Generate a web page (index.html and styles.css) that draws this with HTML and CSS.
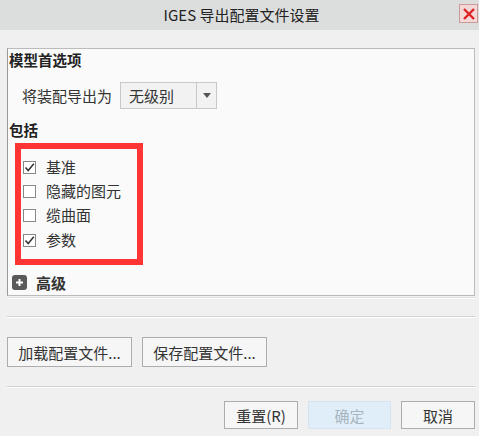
FILE: index.html
```html
<!DOCTYPE html>
<html>
<head>
<meta charset="utf-8">
<link rel="stylesheet" href="styles.css">
</head>
<body>
<div class="dialog">
  <div class="titlebar">
    <div class="title">IGES 导出配置文件设置</div>
    <div class="close">
      <svg width="14" height="14" viewBox="0 0 14 14"><path d="M2 2 L12 12 M12 2 L2 12" stroke="#d22" stroke-width="2.4"/></svg>
    </div>
  </div>
  <div class="body">
    <div class="panel">
      <div class="section-title">模型首选项</div>
      <div class="row-export">
        <span class="label">将装配导出为</span>
        <div class="select">
          <span class="select-value">无级别</span>
          <span class="select-arrow"><svg width="8" height="5" viewBox="0 0 8 5"><path d="M0 0 L8 0 L4 5 Z" fill="#555"/></svg></span>
        </div>
      </div>
      <div class="section-title include">包括</div>
      <div class="highlight">
        <div class="check"><span class="box checked"><svg width="13" height="13" viewBox="0 0 13 13"><path d="M2.5 6.5 L5.2 9.5 L10.8 2.8" stroke="#333" stroke-width="1.5" fill="none"/></svg></span>基准</div>
        <div class="check"><span class="box"></span>隐藏的图元</div>
        <div class="check"><span class="box"></span>缆曲面</div>
        <div class="check"><span class="box checked"><svg width="13" height="13" viewBox="0 0 13 13"><path d="M2.5 6.5 L5.2 9.5 L10.8 2.8" stroke="#333" stroke-width="1.5" fill="none"/></svg></span>参数</div>
      </div>
      <div class="advanced">
        <span class="plus"><svg width="15" height="15" viewBox="0 0 15 15"><rect x="0" y="0" width="15" height="15" rx="3" fill="#5a5a5a"/><path d="M4 7.5 H11 M7.5 4 V11" stroke="#fff" stroke-width="2"/></svg></span>
        <span class="adv-label">高级</span>
      </div>
    </div>
    <div class="sep sep0"></div>
    <div class="sep sep1"></div>
    <div class="file-buttons">
      <button class="btn">加载配置文件...</button>
      <button class="btn">保存配置文件...</button>
    </div>
    <div class="sep sep2"></div>
    <div class="footer">
      <button class="btn fbtn">重置(R)</button>
      <button class="btn fbtn disabled">确定</button>
      <button class="btn fbtn">取消</button>
    </div>
  </div>
</div>
</body>
</html>
```
FILE: styles.css
```css
html, body {
  margin: 0;
  padding: 0;
  width: 479px;
  height: 436px;
  overflow: hidden;
  background: #f0f0f0;
  font-family: "Noto Sans CJK SC", "Microsoft YaHei", sans-serif;
  color: #222;
}
.dialog {
  width: 479px;
  height: 436px;
  display: flex;
  flex-direction: column;
}
.titlebar {
  height: 30px;
  background: #dcdedd;
  position: relative;
  display: flex;
  align-items: center;
  justify-content: center;
}
.title {
  font-size: 15px;
  color: #222;
  margin-left: 4px;
  line-height: 30px;
}
.close {
  position: absolute;
  left: 459px;
  top: 4px;
  width: 17px;
  height: 17px;
  background: #f4d8d8;
  border: 1px solid #c99;
  display: flex;
  align-items: center;
  justify-content: center;
}
.body {
  flex: 1;
  display: flex;
  flex-direction: column;
  padding: 18px 4px 0 7px;
}
.panel {
  background: #fafafa;
  border: 1px solid #bbb;
  border-left: 1px solid #999;
  height: 248px;
  box-sizing: border-box;
  padding: 0 0 0 1px;
  display: flex;
  flex-direction: column;
}
.section-title {
  font-size: 14.5px;
  font-weight: bold;
  line-height: 20px;
  margin-top: 1px;
  color: #222;
}
.row-export {
  display: flex;
  align-items: center;
  margin-top: 12px;
  padding-left: 13px;
}
.label {
  font-size: 15px;
  color: #333;
}
.select {
  margin-left: 8px;
  width: 97px;
  height: 27px;
  border: 1px solid #c8c8c8;
  background: #f2f2f2;
  display: flex;
  box-sizing: border-box;
}
.select-value {
  flex: 1;
  font-size: 15px;
  line-height: 25px;
  padding-left: 8px;
  color: #333;
  border-right: 1px solid #c8c8c8;
}
.select-arrow {
  width: 19px;
  display: flex;
  align-items: center;
  justify-content: center;
}
.include {
  margin-top: 11px;
}
.highlight {
  margin-top: 3px;
  margin-left: 6px;
  width: 128px;
  height: 122px;
  box-sizing: border-box;
  border: 6px solid #ff3535;
  padding: 10px 0 0 2px;
  display: flex;
  flex-direction: column;
  gap: 8px;
}
.check {
  display: flex;
  align-items: center;
  font-size: 15px;
  line-height: 16px;
  color: #333;
}
.check:last-child {
  margin-top: 1px;
}
.box {
  width: 13px;
  height: 13px;
  border: 1px solid #888;
  background: #fff;
  margin-right: 10px;
  display: flex;
  box-sizing: border-box;
  align-items: center;
  justify-content: center;
}
.box.checked svg {
  margin: -1px;
}
.advanced {
  display: flex;
  align-items: center;
  margin-top: 7px;
  padding-left: 3px;
}
.plus {
  width: 15px;
  height: 15px;
  display: flex;
}
.adv-label {
  margin-left: 9px;
  font-size: 15px;
  font-weight: bold;
  color: #333;
}
.sep {
  height: 1px;
  background: #d2d2d2;
  border-bottom: 1px solid #fff;
}
.sep0 {
  margin-top: 1px;
  background: #e0e0e0;
}
.sep1 {
  margin-top: 17px;
}
.file-buttons {
  display: flex;
  gap: 10px;
  margin-top: 19px;
}
.btn {
  font-family: "Noto Sans CJK SC", sans-serif;
  font-size: 15px;
  color: #333;
  background: #f6f6f6;
  border: 1px solid #adadad;
  height: 30px;
  padding: 0;
  box-sizing: border-box;
}
.file-buttons .btn {
  width: 125px;
}
.sep2 {
  margin-top: 19px;
}
.footer {
  display: flex;
  justify-content: flex-end;
  gap: 10px;
  margin-top: 13px;
}
.fbtn {
  width: 74px;
  height: 28px;
}
.fbtn.disabled {
  width: 83px;
  background: #e0eef9;
  border-color: #d5e4f0;
  color: #a8b4c0;
}
```
